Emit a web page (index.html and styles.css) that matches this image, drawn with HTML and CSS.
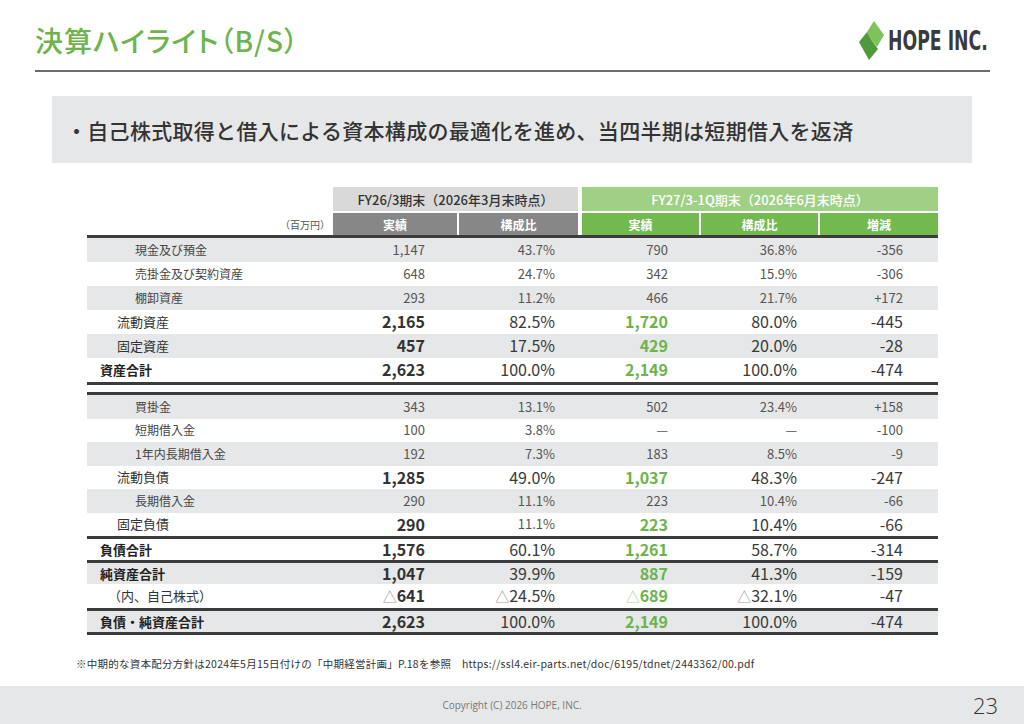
FILE: index.html
```html
<!DOCTYPE html>
<html lang="ja">
<head>
<meta charset="utf-8">
<title>決算ハイライト（B/S）</title>
<link rel="stylesheet" href="styles.css">
</head>
<body>
<div class="page">
  <header class="top">
    <h1 class="title">決算ハイライト（B/S）</h1>
    <div class="logo">
      <svg class="mark" width="26" height="40" viewBox="857 20 26 40" xmlns="http://www.w3.org/2000/svg">
        <polygon points="873,21 883,35 876,47 871,41 866,32" fill="#7cc45a"/>
        <polygon points="866,32 871,41 877,49 868,60 858,42" fill="#4f9a3b"/>
      </svg>
      <span class="logotext">HOPE INC.</span>
    </div>
  </header>

  <div class="banner">・自己株式取得と借入による資本構成の最適化を進め、当四半期は短期借入を返済</div>

  <div class="bs">
    <div class="row hd1">
      <div></div>
      <div class="g1">FY26/3期末（2026年3月末時点）</div>
      <div class="g2">FY27/3-1Q期末（2026年6月末時点）</div>
    </div>
    <div class="row hd2">
      <div class="unit">（百万円）</div>
      <div class="h">実績</div>
      <div class="h sep">構成比</div>
      <div class="h gr gap">実績</div>
      <div class="h gr sep">構成比</div>
      <div class="h gr sep">増減</div>
    </div>

    <div class="sec assets">
      <div class="row r s gray"><div class="lb">現金及び預金</div><div>1,147</div><div>43.7%</div><div>790</div><div>36.8%</div><div>-356</div></div>
      <div class="row r s"><div class="lb">売掛金及び契約資産</div><div>648</div><div>24.7%</div><div>342</div><div>15.9%</div><div>-306</div></div>
      <div class="row r s gray"><div class="lb">棚卸資産</div><div>293</div><div>11.2%</div><div>466</div><div>21.7%</div><div>+172</div></div>
      <div class="row r m"><div class="lb">流動資産</div><div class="b">2,165</div><div class="n">82.5%</div><div class="gb">1,720</div><div class="n">80.0%</div><div class="n">-445</div></div>
      <div class="row r m gray"><div class="lb">固定資産</div><div class="b">457</div><div class="n">17.5%</div><div class="gb">429</div><div class="n">20.0%</div><div class="n">-28</div></div>
      <div class="row r t"><div class="lb">資産合計</div><div class="b">2,623</div><div class="n">100.0%</div><div class="gb">2,149</div><div class="n">100.0%</div><div class="n">-474</div></div>
    </div>

    <div class="sec liab">
      <div class="row r s gray"><div class="lb">買掛金</div><div>343</div><div>13.1%</div><div>502</div><div>23.4%</div><div>+158</div></div>
      <div class="row r s"><div class="lb">短期借入金</div><div>100</div><div>3.8%</div><div>—</div><div>—</div><div>-100</div></div>
      <div class="row r s gray"><div class="lb">1年内長期借入金</div><div>192</div><div>7.3%</div><div>183</div><div>8.5%</div><div>-9</div></div>
      <div class="row r m"><div class="lb">流動負債</div><div class="b">1,285</div><div class="n">49.0%</div><div class="gb">1,037</div><div class="n">48.3%</div><div class="n">-247</div></div>
      <div class="row r s gray"><div class="lb">長期借入金</div><div>290</div><div>11.1%</div><div>223</div><div>10.4%</div><div>-66</div></div>
      <div class="row r m"><div class="lb">固定負債</div><div class="b">290</div><div>11.1%</div><div class="gb">223</div><div class="n">10.4%</div><div class="n">-66</div></div>
      <div class="row r t line"><div class="lb">負債合計</div><div class="b">1,576</div><div class="n">60.1%</div><div class="gb">1,261</div><div class="n">58.7%</div><div class="n">-314</div></div>
      <div class="row r t line gray"><div class="lb">純資産合計</div><div class="b">1,047</div><div class="n">39.9%</div><div class="gb">887</div><div class="n">41.3%</div><div class="n">-159</div></div>
      <div class="row r m own"><div class="lb">（内、自己株式）</div><div class="b"><span class="tri">△</span>641</div><div class="n"><span class="tri">△</span>24.5%</div><div class="gb"><span class="tri">△</span>689</div><div class="n"><span class="tri">△</span>32.1%</div><div class="n">-47</div></div>
      <div class="row r t line gray"><div class="lb">負債・純資産合計</div><div class="b">2,623</div><div class="n">100.0%</div><div class="gb">2,149</div><div class="n">100.0%</div><div class="n">-474</div></div>
    </div>
  </div>

  <p class="note">※中期的な資本配分方針は2024年5月15日付けの「中期経営計画」P.18を参照　https://ssl4.eir-parts.net/doc/6195/tdnet/2443362/00.pdf</p>

  <footer class="foot">
    <span></span>
    <span class="copy">Copyright (C) 2026 HOPE, INC.</span>
    <span class="pno">23</span>
  </footer>
</div>
</body>
</html>
```

FILE: styles.css
```css
* { box-sizing: border-box; }
body { margin: 0; background: #fff; }

.page {
  width: 1024px;
  height: 724px;
  display: flex;
  flex-direction: column;
  overflow: hidden;
  font-family: "Noto Sans CJK JP", "Noto Sans", sans-serif;
  color: #333;
}

/* header */
.top {
  display: flex;
  justify-content: space-between;
  align-items: center;
  height: 72px;
  padding-top: 10px;
  margin: 0 34px 0 35px;
  border-bottom: 2px solid #6b6b6b;
}
.title {
  margin: 0;
  font-size: 28px;
  font-weight: 500;
  color: #6cb44b;
  line-height: 1;
  font-feature-settings: "palt";
  letter-spacing: 1px;
}
.logo {
  display: flex;
  align-items: center;
  gap: 4px;
  margin-right: 2px;
}
.mark { display: block; }
.logotext {
  display: block;
  font-family: "DejaVu Sans", sans-serif;
  font-weight: 700;
  font-size: 27px;
  line-height: 1;
  color: #3b3b3b;
  white-space: nowrap;
  transform: scaleX(0.64);
  transform-origin: left center;
  margin-right: -56px;
}

/* banner */
.banner {
  margin: 24px 52px 0 52px;
  height: 67px;
  background: #e6e7e8;
  display: flex;
  align-items: center;
  padding-left: 14px;
  font-size: 21px;
  font-weight: 500;
  letter-spacing: 0.3px;
  color: #333;
}

/* table */
.bs {
  margin: 24px 0 0 87px;
  width: 851px;
}
.row {
  display: grid;
  grid-template-columns: 246px 124px 121px 121px 119px 120px;
}
.hd1 { height: 24px; margin-bottom: 2px; }
.hd1 .g1, .hd1 .g2 {
  display: flex;
  align-items: center;
  justify-content: center;
  font-size: 13px;
  font-weight: 500;
}
.hd1 .g1 { grid-column: 2 / 4; background: #d9d9d9; color: #333; }
.hd1 .g2 { grid-column: 4 / 7; background: #a0d086; color: #fff; border-left: 4px solid #fff; }

.hd2 { height: 22px; }
.hd2 .unit {
  align-self: center;
  text-align: right;
  padding-right: 3px;
  font-size: 10px;
  color: #555;
}
.hd2 .h {
  display: flex;
  align-items: center;
  justify-content: center;
  background: #878787;
  color: #fff;
  font-size: 12px;
  font-weight: 700;
}
.hd2 .h.gr { background: #72b94f; }
.hd2 .h.sep { border-left: 2px solid #fff; }
.hd2 .h.gap { border-left: 4px solid #fff; }

.sec {
  border-top: 3px solid #3c3c3c;
  border-bottom: 3px solid #3c3c3c;
}
.liab { margin-top: 7px; }

.r { height: 24px; align-items: center; }
.liab .r { height: 23.5px; }
.liab .r.line, .liab .r.own { height: 24px; }
.r.line { border-top: 3px solid #3c3c3c; }
.gray { background: #e6e7e8; }

.r > div {
  text-align: right;
  white-space: nowrap;
  font-size: 13px;
  line-height: 1.2;
  color: #555;
}
.r > div:nth-child(2) { padding-right: 32px; }
.r > div:nth-child(3) { padding-right: 23px; }
.r > div:nth-child(4) { padding-right: 31px; }
.r > div:nth-child(5) { padding-right: 21px; }
.r > div:nth-child(6) { padding-right: 35px; }

.r > .lb { text-align: left; color: #444; }
.s > .lb { padding-left: 48px; font-size: 12px; }
.m > .lb { padding-left: 30px; font-size: 13px; color: #333; }
.t > .lb { padding-left: 13px; font-size: 13px; font-weight: 700; color: #222; }
.own > .lb { padding-left: 21px; }

.r > .b { font-size: 16px; font-weight: 700; color: #333; }
.r > .n { font-size: 16px; font-weight: 400; color: #3a3a3a; }
.r > .gb { font-size: 16px; font-weight: 700; color: #6cb44b; }
.tri { font-size: 14px; font-weight: 400; color: #9a9a9a; }
.gb .tri { color: #a8d394; }

/* note */
.note {
  margin: 21px 0 0 76px;
  font-size: 10.5px;
  letter-spacing: 0.25px;
  color: #333;
}

/* footer */
.foot {
  margin-top: auto;
  height: 38px;
  background: #e6e7e8;
  display: grid;
  grid-template-columns: 1fr auto 1fr;
  align-items: center;
  font-family: "Open Sans", "Noto Sans", sans-serif;
}
.copy { font-size: 10px; color: #777; }
.pno {
  justify-self: end;
  padding-right: 26px;
  font-size: 22px;
  font-weight: 300;
  color: #333;
}
```
